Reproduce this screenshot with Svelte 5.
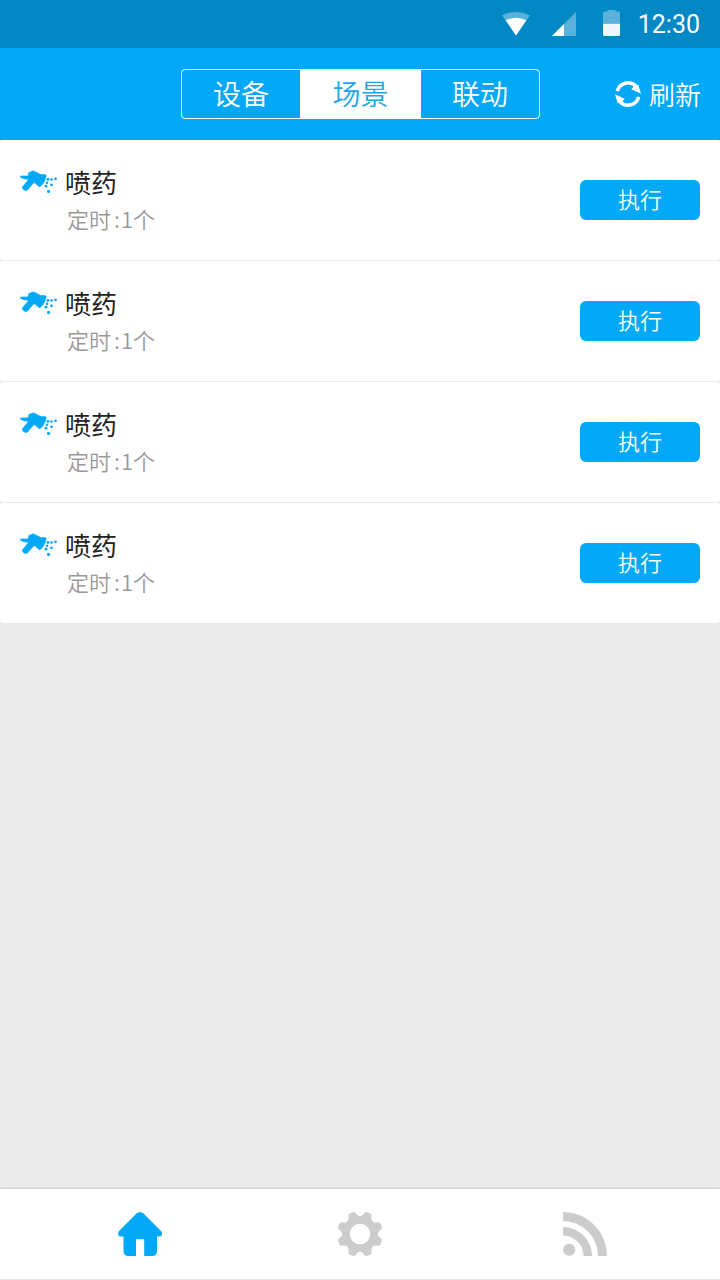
<script>
  const tabs = ['设备', '场景', '联动'];
  let activeTab = $state(1);

  const scenes = [
    { id: 1, name: '喷药', timers: 1 },
    { id: 2, name: '喷药', timers: 1 },
    { id: 3, name: '喷药', timers: 1 },
    { id: 4, name: '喷药', timers: 1 },
  ];

  const teeth = [22.5, 67.5, 112.5, 157.5, 202.5, 247.5, 292.5, 337.5];
</script>

<div class="screen">
  <div class="status-bar">
    <svg class="wifi" width="28" height="24" viewBox="0 0 28 24">
      <path d="M0 3.4Q14-3.4 28 3.4L14 23.5Z" fill="#fff" opacity=".35" />
      <path d="M3.7 8.2Q14 3.2 24.3 8.2L14 23.5Z" fill="#fff" />
    </svg>
    <svg class="signal" width="24" height="24" viewBox="0 0 24 24">
      <path d="M24 0V24H0Z" fill="#fff" opacity=".35" />
      <path d="M12 12V24H0Z" fill="#fff" />
    </svg>
    <svg class="battery" width="17" height="26" viewBox="0 0 17 26">
      <path d="M4.5 0h8v1.5H15.5q1.5 0 1.5 1.5V13.7H0V3Q0 1.5 1.5 1.5h3z" fill="#fff" opacity=".35" />
      <path d="M0 13.7H17V24.5Q17 26 15.5 26H1.5Q0 26 0 24.5Z" fill="#f0f7fc" />
    </svg>
    <span class="clock">12:30</span>
  </div>

  <header class="header">
    <div class="tabs">
      {#each tabs as tab, i}
        <button class="tab" class:active={i === activeTab} onclick={() => (activeTab = i)}>{tab}</button>
      {/each}
    </div>
    <button class="refresh">
      <svg width="26" height="26" viewBox="0 0 26 26">
        <g id="arrow">
          <path d="M2.3 10.2A11 11 0 0 1 21 5.3" fill="none" stroke="#fff" stroke-width="3.5" />
          <path d="M23.2 3.5L26 12.8L16.3 8.2L18.5 5.5L21 5Z" fill="#fff" />
        </g>
        <use href="#arrow" transform="rotate(180 13 13)" />
      </svg>
      <span>刷新</span>
    </button>
  </header>

  <ul class="list">
    {#each scenes as scene (scene.id)}
      <li class="row">
        <svg class="spray" width="38" height="26" viewBox="0 0 38 26" fill="#03a9f6">
          <path stroke="#03a9f6" stroke-width=".7" d="M.5 7.3Q0 5.8 1.8 6L7.8 6Q9 4.5 8.6 3.2Q8.8 2 10.5 2.1Q12 .5 14.3 1.2L18.3 3.3Q20.5 5.2 23.5 4.6Q26.5 4.4 26.2 6Q25.6 8 24.8 10.5Q22.8 14.5 20.5 16.3Q19.2 17.2 17.8 15.6L15.2 13Q14 12.2 12.8 13.7L7.5 20Q5.7 21.2 4 19.8L2.7 18.7Q1.9 17.5 3 16.2L8.8 9.3Q4 9.4.5 7.3Z" />
          <circle cx="28" cy="9.4" r="1.4" />
          <circle cx="31.5" cy="9.5" r="1.3" />
          <circle cx="35.5" cy="8.8" r="1.4" />
          <circle cx="27" cy="12.8" r="1.3" />
          <circle cx="31.5" cy="14.8" r="1.4" />
          <circle cx="26" cy="16.2" r="1.4" />
          <circle cx="28.6" cy="21.4" r="1.6" />
        </svg>
        <div class="info">
          <div class="name">{scene.name}</div>
          <div class="timer">定时<span class="colon">:</span>{scene.timers}个</div>
        </div>
        <button class="run">执行</button>
      </li>
    {/each}
  </ul>

  <nav class="nav">
    <button class="nav-item" aria-label="home">
      <svg width="44" height="44" viewBox="0 0 44 44" fill="#03a9f6">
        <path d="M18.5 1.5Q22-1.500 25.5 1.5L43 19Q45 21.5 43.5 23.5Q42.7 24.6 41 24.6H39V39Q39 44 34 44H26.200V27.3H18V44H10.5Q5.5 44 5.5 39V24.6H3Q1.3 24.6.5 23.5Q-.5 21.5 1 19Z" />
      </svg>
    </button>
    <button class="nav-item" aria-label="settings">
      <svg width="46" height="46" viewBox="-23 -23 46 46">
        <circle r="14" fill="none" stroke="#ccc" stroke-width="7.4" />
        {#each teeth as angle}
          <path d="M-7-15.9Q-5-17-4.300-19.800Q-3.800-22.800-1.800-22.900H1.800Q3.800-22.800 4.300-19.800Q5-17 7-15.900Z" fill="#ccc" transform="rotate({angle})" />
        {/each}
      </svg>
    </button>
    <button class="nav-item feed" aria-label="feed">
      <svg width="44" height="44" viewBox="0 0 44 44" fill="#ccc">
        <path d="M0 0A44 44 0 0 1 44 44H35A35 35 0 0 0 0 9Z" />
        <path d="M0 15A29 29 0 0 1 29 44H20.5A20.5 20.5 0 0 0 0 23.5Z" />
        <circle cx="6.2" cy="37.8" r="6.1" />
      </svg>
    </button>
  </nav>
</div>

<style>
  :global(body) {
    margin: 0;
  }

  .screen {
    width: 720px;
    height: 1280px;
    display: flex;
    flex-direction: column;
    background: #ebebeb;
    font-family: 'Noto Sans CJK SC', sans-serif;
  }

  button {
    margin: 0;
    padding: 0;
    border: 0;
    background: none;
    font-family: inherit;
    font-weight: 350;
    cursor: pointer;
  }

  svg {
    display: block;
    flex: none;
  }

  .status-bar {
    height: 48px;
    box-sizing: border-box;
    padding-right: 20px;
    display: flex;
    align-items: center;
    justify-content: flex-end;
    background: #0288c5;
    color: #fff;
  }
  .wifi {
    margin-right: 22px;
  }
  .signal {
    margin-right: 27px;
  }
  .battery {
    margin: 0 18px 3px 0;
  }
  .clock {
    padding-top: 2px;
    font-family: Roboto, sans-serif;
    font-size: 25px;
    line-height: 46px;
  }

  .header {
    height: 92px;
    display: grid;
    grid-template-columns: 1fr 359px 1fr;
    align-items: center;
    background: #03a9f6;
  }
  .tabs {
    grid-column: 2;
    height: 50px;
    box-sizing: border-box;
    display: flex;
    border: 1px solid #fff;
    border-radius: 4px;
    overflow: hidden;
  }
  .tab {
    flex: 1;
    padding: 0 0 2px 1px;
    color: #fff;
    font-size: 28px;
    line-height: 46px;
  }
  .tab.active {
    flex: 0 0 121px;
    background: #fff;
    color: #22a5e8;
  }
  .refresh {
    justify-self: end;
    margin-right: 19px;
    display: flex;
    align-items: center;
    gap: 8px;
    color: #fff;
    font-size: 26px;
    line-height: 40px;
  }

  .list {
    flex: 1;
    margin: 0;
    padding: 0;
    list-style: none;
  }
  .row {
    height: 120px;
    margin-bottom: 1px;
    box-sizing: border-box;
    padding: 0 20px;
    display: flex;
    align-items: center;
    background: #fff;
    border-radius: 3px;
  }
  .spray {
    align-self: flex-start;
    margin-top: 30px;
  }
  .info {
    flex: 1;
    align-self: flex-start;
    padding: 23px 0 0 7px;
  }
  .name {
    color: #222;
    font-size: 26px;
    line-height: 38px;
  }
  .timer {
    padding-left: 2px;
    color: #999;
    font-size: 22px;
    font-weight: 350;
    line-height: 35px;
  }
  .colon {
    margin: 0 1px 0 3px;
  }
  .run {
    width: 120px;
    height: 40px;
    padding-bottom: 3px;
    border-radius: 6px;
    background: #03a9f6;
    color: #fff;
    font-size: 22px;
    line-height: 37px;
  }

  .nav {
    height: 91px;
    box-sizing: border-box;
    display: grid;
    grid-template-columns: repeat(3, 220px);
    justify-content: center;
    background: #fff;
    border-bottom: 1px solid #e4e4e4;
    box-shadow: 0 -1px 2px rgba(0, 0, 0, 0.15);
  }
  .nav-item {
    display: flex;
    align-items: center;
    justify-content: center;
  }
  .feed {
    padding-left: 10px;
  }
</style>
